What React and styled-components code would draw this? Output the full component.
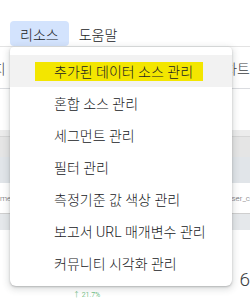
import React from 'react';
import styled, {createGlobalStyle} from 'styled-components';

const GlobalStyle = createGlobalStyle`
  html, body {
    margin: 0;
    background: #ffffff;
  }

  body {
    font-family: Roboto, "Noto Sans CJK KR", sans-serif;
    font-weight: 300;
    color: #202124;
  }
`;

const Page = styled.div`
  position: relative;
  width: 250px;
  height: 304px;
  overflow: hidden;
  background: #ffffff;
`;

const MenuBar = styled.div`
  display: flex;
  align-items: flex-end;
  height: 25px;
  padding-top: 21px;
  padding-left: 10px;
  border-bottom: 1px solid #e3e3e3;
`;

const MenuButton = styled.div`
  display: flex;
  align-items: center;
  height: 25px;
  padding: 0 10px;
  font-size: 14px;
  color: #202124;
  border-radius: 4px;
  background: ${(props) => (props.$open ? '#d3e3fd' : 'transparent')};
`;

const Toolbar = styled.div`
  display: flex;
  justify-content: space-between;
  align-items: center;
  height: 41px;
  border-bottom: 1px solid #dadce0;
  font-size: 14px;
  color: #3c4043;
  white-space: nowrap;
`;

const ToolbarItem = styled.span`
  margin-left: ${(props) => props.$shift || 0}px;
  margin-right: ${(props) => props.$overflow || 0}px;
`;

const Spacer = styled.div`
  height: ${(props) => props.$h}px;
`;

const Band = styled.div`
  height: ${(props) => props.$h}px;
  background: ${(props) => props.$bg};
  border-bottom: ${(props) => (props.$line ? `1px solid ${props.$line}` : 'none')};
`;

const DataRow = styled.div`
  display: flex;
  justify-content: space-between;
  align-items: center;
  height: 29px;
  padding-top: 1px;
  border-bottom: 1px solid #cfcfcf;
  font-size: 8px;
  color: #5f6368;
  white-space: nowrap;
`;

const Score = styled.div`
  display: flex;
  justify-content: space-between;
  align-items: flex-end;
  padding-top: 38px;
  padding-left: 73px;
  white-space: nowrap;
`;

const Delta = styled.span`
  font-size: 7px;
  color: #34a853;
  margin-bottom: -8px;
`;

const BigNumber = styled.span`
  font-size: 19px;
  color: #3c4043;
`;

const Dropdown = styled.ul`
  position: absolute;
  top: 47px;
  left: 10px;
  width: 222px;
  margin: 0;
  padding: 8px 0 7px;
  list-style: none;
  background: #ffffff;
  border-radius: 4px 4px 6px 6px;
  box-shadow: 0 2px 6px 2px rgba(60, 64, 67, 0.15), 0 1px 2px rgba(60, 64, 67, 0.3);
`;

const Item = styled.li`
  display: flex;
  align-items: center;
  height: 32px;
  padding-left: 44px;
  font-size: 14px;
  color: #202124;
  white-space: nowrap;
  background: ${(props) => (props.$active ? '#f2f2f2' : 'transparent')};
`;

const Marked = styled.span`
  display: flex;
  align-items: center;
  height: 19px;
  margin-left: -19px;
  padding: 0 10px 0 19px;
  background: #f3e600;
`;

const items = [
  '혼합 소스 관리',
  '세그먼트 관리',
  '필터 관리',
  '측정기준 값 색상 관리',
  '보고서 URL 매개변수 관리',
  '커뮤니티 시각화 관리'
];

const App = () => (
  <Page>
    <GlobalStyle />
    <MenuBar>
      <MenuButton $open>리소스</MenuButton>
      <MenuButton>도움말</MenuButton>
    </MenuBar>
    <Toolbar>
      <ToolbarItem $shift={-33}>페이지</ToolbarItem>
      <ToolbarItem>차트</ToolbarItem>
    </Toolbar>
    <Spacer $h={41} />
    <Band $h={6} $bg="#ececec" $line="#d6d6d6" />
    <Band $h={20} $bg="#e5e5e5" />
    <Band $h={26} $bg="#e1e5e9" />
    <DataRow>
      <span>metric</span>
      <span>user_c</span>
    </DataRow>
    <Band $h={16} $bg="#e5e8eb" />
    <Score>
      <Delta>↑ 21.7%</Delta>
      <BigNumber>6</BigNumber>
    </Score>
    <Dropdown>
      <Item $active>
        <Marked>추가된 데이터 소스 관리</Marked>
      </Item>
      {items.map((label) => (
        <Item key={label}>{label}</Item>
      ))}
    </Dropdown>
  </Page>
);

export default App;
